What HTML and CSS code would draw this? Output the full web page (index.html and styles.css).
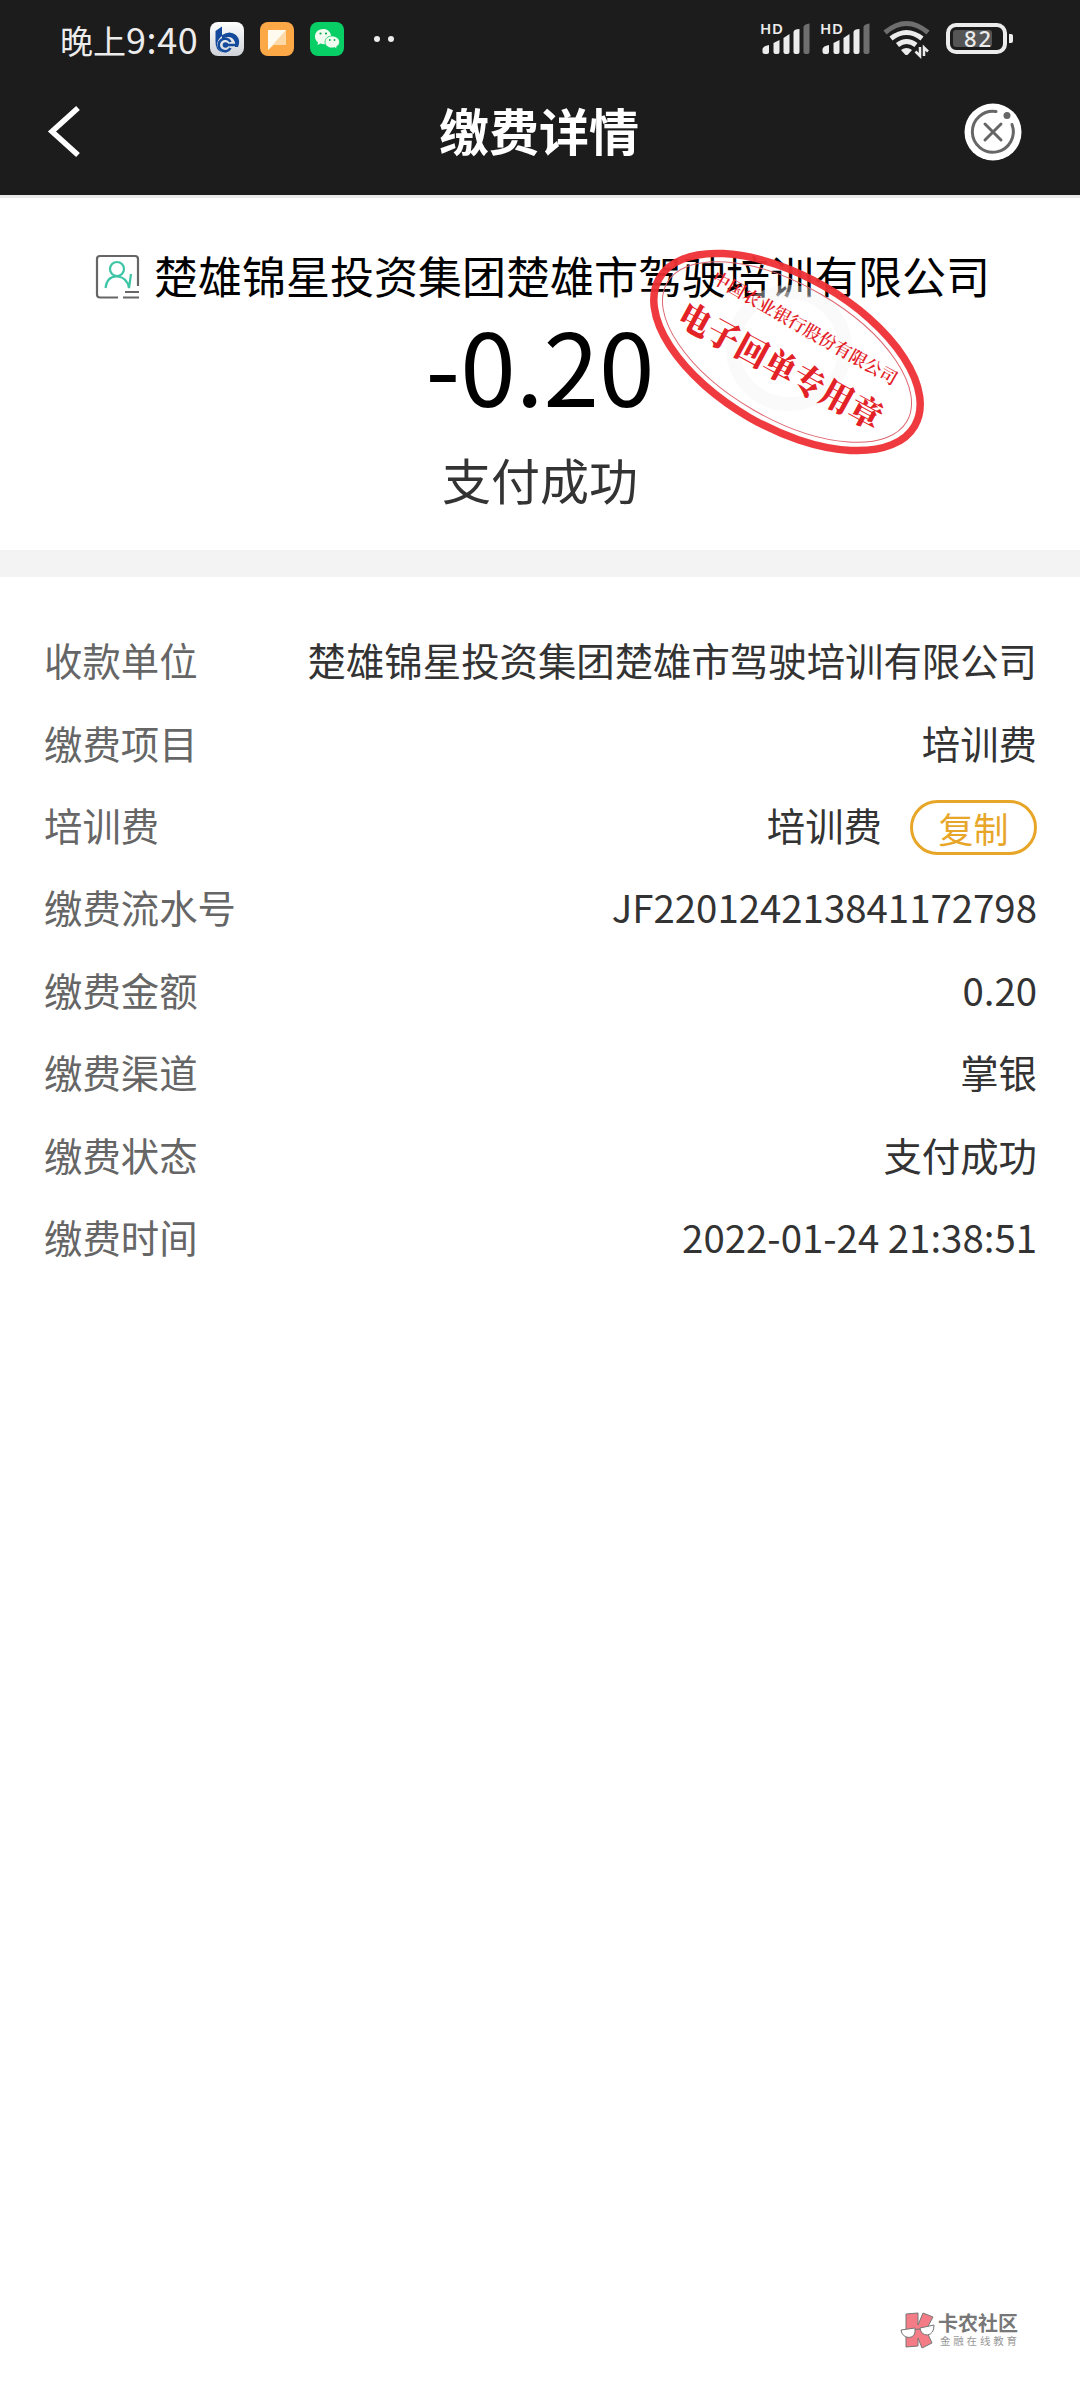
FILE: index.html
```html
<!DOCTYPE html>
<html lang="zh-CN">
<head>
    <meta charset="utf-8">
    <title>缴费详情</title>
    <link rel="stylesheet" href="styles.css">
</head>
<body>

<div class="header">
  <div class="status">
    <span class="time">晚上<span class="clock">9:40</span></span>
    <div class="apps">
      <svg width="34" height="34" viewBox="0 0 34 34">
        <defs><linearGradient id="silver" x1="0" y1="0" x2="0" y2="1"><stop offset="0" stop-color="#fff"/><stop offset="1" stop-color="#cfd2d8"/></linearGradient></defs>
        <rect width="34" height="34" rx="8" fill="url(#silver)"/>
        <path d="M5.500 9 L12 4.500 V14 Q7 18 7 23 Q8 28 13 31 Q5 28.500 5.500 19Z" fill="#134a9c"/>
        <path d="M12 13 Q20 8 26 13 Q31 18 28 25 H25 Q26 19 22 16 Q18 13.500 12 17Z" fill="#134a9c"/>
        <path d="M20.500 20 A6.300 6.300 0 1 0 20.500 26 M16 23 H28" fill="none" stroke="#134a9c" stroke-width="2.600"/>
        <circle cx="15.500" cy="23" r="2.800" fill="#134a9c"/>
      </svg>
      <svg width="34" height="34" viewBox="0 0 34 34">
        <rect width="34" height="34" rx="8" fill="#fda847"/>
        <path d="M8 8 H26 V23 H14 L8 28Z" fill="#fed9a8"/>
        <path d="M8 8 H26 L8 28Z" fill="#fffaf0"/>
      </svg>
      <svg width="34" height="34" viewBox="0 0 34 34">
        <rect width="34" height="34" rx="8" fill="#07cf66"/>
        <path d="M13.500 7 C8.500 7 5 10 5 14.500 C5 17 6 19 8 20.300 L7.500 23 L10.500 21.500 Q17 23.500 20.500 19.500 C23 14 20 7 13.500 7Z" fill="#f1fbef"/>
        <path d="M22 14 C18 14 15 16.500 15 20 C15 23.500 18 26 22 26 Q23.500 26 24.500 25.600 L27 27 L26.600 24.700 C28.500 23.500 29.500 22 29.500 20 C29.500 16.500 26 14 22 14Z" fill="#f1fbef" stroke="#07cf66" stroke-width=".8"/>
        <g fill="#07a854"><circle cx="10.500" cy="11.500" r="1.100"/><circle cx="16" cy="11.500" r="1.100"/><circle cx="19.800" cy="18" r=".9"/><circle cx="24.500" cy="18" r=".9"/></g>
      </svg>
    </div>
    <span class="dots"><i></i><i></i></span>
    <div class="signals">
      <svg width="52" height="40" viewBox="0 0 52 40">
        <text class="hd" x="0" y="15" textLength="23">HD</text>
        <path d="M2.500 33 V30 Q3 27 9 26 V33 Q9 35 7 35 H5 Q2.500 35 2.500 33Z"/>
        <path d="M13.500 24 L19.500 21 V33 Q19.500 35 17.500 35 H15.500 Q13.500 35 13.500 33Z"/>
        <path d="M23.500 19 L29.500 15 V33 Q29.500 35 27.500 35 H25.500 Q23.500 35 23.500 33Z"/>
        <path d="M33.500 13 Q34 10 39.500 10 V33 Q39.500 35 37.500 35 H35.500 Q33.500 35 33.500 33Z"/>
        <path class="off" d="M43.500 8 Q44 5 49.500 4.500 V33 Q49.500 35 47.500 35 H45.500 Q43.500 35 43.500 33Z"/>
      </svg>
      <svg width="52" height="40" viewBox="0 0 52 40">
        <text class="hd" x="0" y="15" textLength="23">HD</text>
        <path d="M2.500 33 V30 Q3 27 9 26 V33 Q9 35 7 35 H5 Q2.500 35 2.500 33Z"/>
        <path d="M13.500 24 L19.500 21 V33 Q19.500 35 17.500 35 H15.500 Q13.500 35 13.500 33Z"/>
        <path d="M23.500 19 L29.500 15 V33 Q29.500 35 27.500 35 H25.500 Q23.500 35 23.500 33Z"/>
        <path d="M33.500 13 Q34 10 39.500 10 V33 Q39.500 35 37.500 35 H35.500 Q33.500 35 33.500 33Z"/>
        <path class="off" d="M43.500 8 Q44 5 49.500 4.500 V33 Q49.500 35 47.500 35 H45.500 Q43.500 35 43.500 33Z"/>
      </svg>
      <svg class="wifi" width="48" height="40" viewBox="0 0 48 40">
        <path d="M2 13.500 Q23.500 -4.500 45 13.500" fill="none" stroke="#6e6e6e" stroke-width="5"/>
        <path d="M8 19.500 Q23.500 7.500 39 19.500 M14.500 26 Q23.500 19 33 26" fill="none" stroke="#ececec" stroke-width="5"/>
        <path d="M18 31 Q23.500 27 29 31 L25 35.500 Q23.500 36.500 22 35.500Z"/>
        <path d="M37 28 V37 L32.500 32.500 M41 37 V28.500 L45 32.500" fill="none" stroke="#ececec" stroke-width="2.500"/>
      </svg>
      <svg class="battery" width="68" height="40" viewBox="0 0 68 40">
        <rect x="2" y="6" width="57" height="27" rx="8" fill="none" stroke="#ececec" stroke-width="4"/>
        <rect x="7" y="11" width="39" height="17" rx="3" fill="#555"/>
        <path d="M63 15 H65 Q67 15 67 17 V22 Q67 24 65 24 H63Z"/>
        <text x="18" y="28" textLength="27">82</text>
      </svg>
    </div>
  </div>
  <div class="nav">
    <svg class="back" width="34" height="52" viewBox="0 0 34 52"><path d="M30 2 L4 25.500 L30 49" fill="none" stroke="#fff" stroke-width="5.500"/></svg>
    <h1>缴费详情</h1>
    <svg class="close" width="58" height="58" viewBox="0 0 58 58">
      <circle cx="29" cy="29" r="28.500" fill="#fff"/>
      <g fill="none" stroke="#666" stroke-width="3" stroke-linecap="round">
        <path d="M32 8.500 A20.500 20.500 0 1 0 48 21.500"/>
        <path d="M21 21 L37 37 M37 21 L21 37"/>
      </g>
      <circle cx="43" cy="12.500" r="3.500" fill="#666"/>
    </svg>
  </div>
</div>

<div class="summary">
  <div class="payee">
    <svg width="44" height="44" viewBox="0 0 44 44" fill="none" stroke-width="2.200">
      <path d="M22 42.500 H4 Q1 42.500 1 39.500 V4 Q1 1 4 1 H39 Q42 1 42 4 V31 M29 37 H43 M27 42.500 H43" stroke="#666"/>
      <circle cx="21" cy="14" r="7" stroke="#3cc5a5"/>
      <path d="M9.500 33 Q11 21 21 21.500 Q31 22 33 33 L35 19" stroke="#3cc5a5"/>
    </svg>
    <span>楚雄锦星投资集团楚雄市驾驶培训有限公司</span>
  </div>
  <p class="amount">-0.20</p>
  <p class="result">支付成功</p>
  <svg class="stamp" width="280" height="210" viewBox="0 0 280 210">
    <circle cx="142" cy="101" r="56" fill="#fff" fill-opacity=".3" stroke="#f2f2f2" stroke-opacity=".4" stroke-width="14"/>
    <g transform="rotate(30 140 105)" fill="none">
      <ellipse cx="140" cy="105" rx="147.500" ry="75.500" stroke="#ee3035" stroke-opacity=".95" stroke-width="7.500"/>
      <ellipse cx="140" cy="105" rx="138.500" ry="67" stroke="#dd6670" stroke-width="1"/>
    </g>
    <text class="bank" transform="translate(158 81) rotate(29.700)" y="6.500" textLength="210">中国农业银行股份有限公司</text>
    <text class="seal" transform="translate(133 120) rotate(28.500)" y="11.500" textLength="226" lengthAdjust="spacingAndGlyphs">电子回单专用章</text>
  </svg>
</div>

<div class="detail">
  <div class="row"><label>收款单位</label><span>楚雄锦星投资集团楚雄市驾驶培训有限公司</span></div>
  <div class="row"><label>缴费项目</label><span>培训费</span></div>
  <div class="row"><label>培训费</label><span>培训费</span><button>复制</button></div>
  <div class="row"><label>缴费流水号</label><span>JF220124213841172798</span></div>
  <div class="row"><label>缴费金额</label><span>0.20</span></div>
  <div class="row"><label>缴费渠道</label><span>掌银</span></div>
  <div class="row"><label>缴费状态</label><span>支付成功</span></div>
  <div class="row"><label>缴费时间</label><span>2022-01-24 21:38:51</span></div>
</div>

<div class="footer">
  <svg width="36" height="38" viewBox="0 0 36 38">
    <path d="M6 2 L18 1 V13 L23 1 L33 5 L26 18 L32 31 L22 36 L18 26 V34 L6 35Z" fill="#f47c86" stroke="#777" stroke-width="1"/>
    <path d="M1 18 L15 16 Q16 25 9 25.500 Q2 25 1 18Z M20 16 L34 13 Q34 22 27.500 23 Q21 23 20 16Z M15 17.500 L20 17" fill="#fff" stroke="#777"/>
  </svg>
  <div>
    <b>卡农社区</b>
    <small>金融在线教育</small>
  </div>
</div>

</body>
</html>
```
FILE: styles.css
```css
* {
  margin: 0;
  padding: 0;
  box-sizing: border-box;
}
body {
  display: flex;
  flex-direction: column;
  height: 2400px;
  background: #fff;
  color: #333;
  font-family: "Noto Sans CJK SC", sans-serif;
}
svg {
  display: block;
  flex: none;
  overflow: visible;
}
.header {
  height: 198px;
  background: #1c1c1c;
  border-bottom: 3px solid #e9e9e9;
}
.status {
  display: flex;
  align-items: center;
  height: 78px;
  padding: 0 66px 0 60px;
  color: #ececec;
}
.time {
  width: 150px;
  font-size: 33px;
  line-height: 76px;
  white-space: nowrap;
}
.clock {
  font-size: 36px;
  letter-spacing: .6px;
}
.apps {
  display: flex;
  gap: 16px;
}
.dots {
  display: flex;
  gap: 8px;
  margin-left: 30px;
}
.dots i {
  width: 6px;
  height: 6px;
  border-radius: 50%;
  background: #ececec;
}
.signals {
  display: flex;
  margin-left: auto;
  gap: 8px;
  fill: #ececec;
}
.signals .off {
  fill: #6e6e6e;
}
.hd {
  font: 600 15px "Noto Sans", sans-serif;
}
.wifi {
  margin-left: 3px;
}
.battery {
  margin-left: 7px;
}
.battery text {
  font: 500 22px "Noto Sans", sans-serif;
}
.nav {
  display: flex;
  align-items: center;
  justify-content: space-between;
  height: 107px;
  padding: 0 58px 0 48px;
}
.nav h1 {
  margin: -5px 0 0 32px;
  color: #fff;
  font-size: 50px;
  font-weight: 700;
}
.summary {
  position: relative;
  height: 379px;
  padding-top: 46px;
  border-bottom: 27px solid #f3f3f3;
  text-align: center;
}
.payee {
  display: flex;
  align-items: center;
  justify-content: center;
  gap: 14px;
  height: 66px;
  padding-left: 6px;
  color: #000;
  font-size: 44px;
  white-space: nowrap;
}
.payee span {
  margin-top: -4px;
}
.amount {
  height: 120px;
  margin-top: -6px;
  color: #000;
  font-size: 100px;
  line-height: 120px;
}
.result {
  height: 100px;
  margin-top: 5px;
  font-size: 49px;
  line-height: 100px;
}
.stamp {
  position: absolute;
  left: 647px;
  top: 49px;
}
.stamp text {
  fill: #e32228;
  text-anchor: middle;
  font-family: "Noto Serif CJK SC", "Noto Sans CJK SC", serif;
}
.stamp .bank {
  font-size: 17.5px;
  font-weight: 600;
}
.stamp .seal {
  font-size: 34px;
  font-weight: 900;
}
.detail {
  padding: 41px 43px 0 44px;
  font-size: 38.4px;
}
.row {
  display: flex;
  align-items: center;
  height: 82.4px;
}
.row label {
  margin-right: auto;
  color: #666;
}
.row button {
  width: 127px;
  height: 55px;
  margin: 7px 0 0 28px;
  border: 3px solid #e8a628;
  border-radius: 28px;
  background: #fff;
  color: #e8a628;
  font: 35px/49px "Noto Sans CJK SC", sans-serif;
}
.footer {
  display: flex;
  gap: 2px;
  margin: auto 0 50px 900px;
  color: #777;
}
.footer b, .footer small {
  display: block;
  white-space: nowrap;
}
.footer b {
  font-size: 20px;
  line-height: 22px;
}
.footer small {
  padding-left: 2px;
  color: #999;
  font-size: 10.5px;
  letter-spacing: 2.8px;
  line-height: 14px;
}
```
